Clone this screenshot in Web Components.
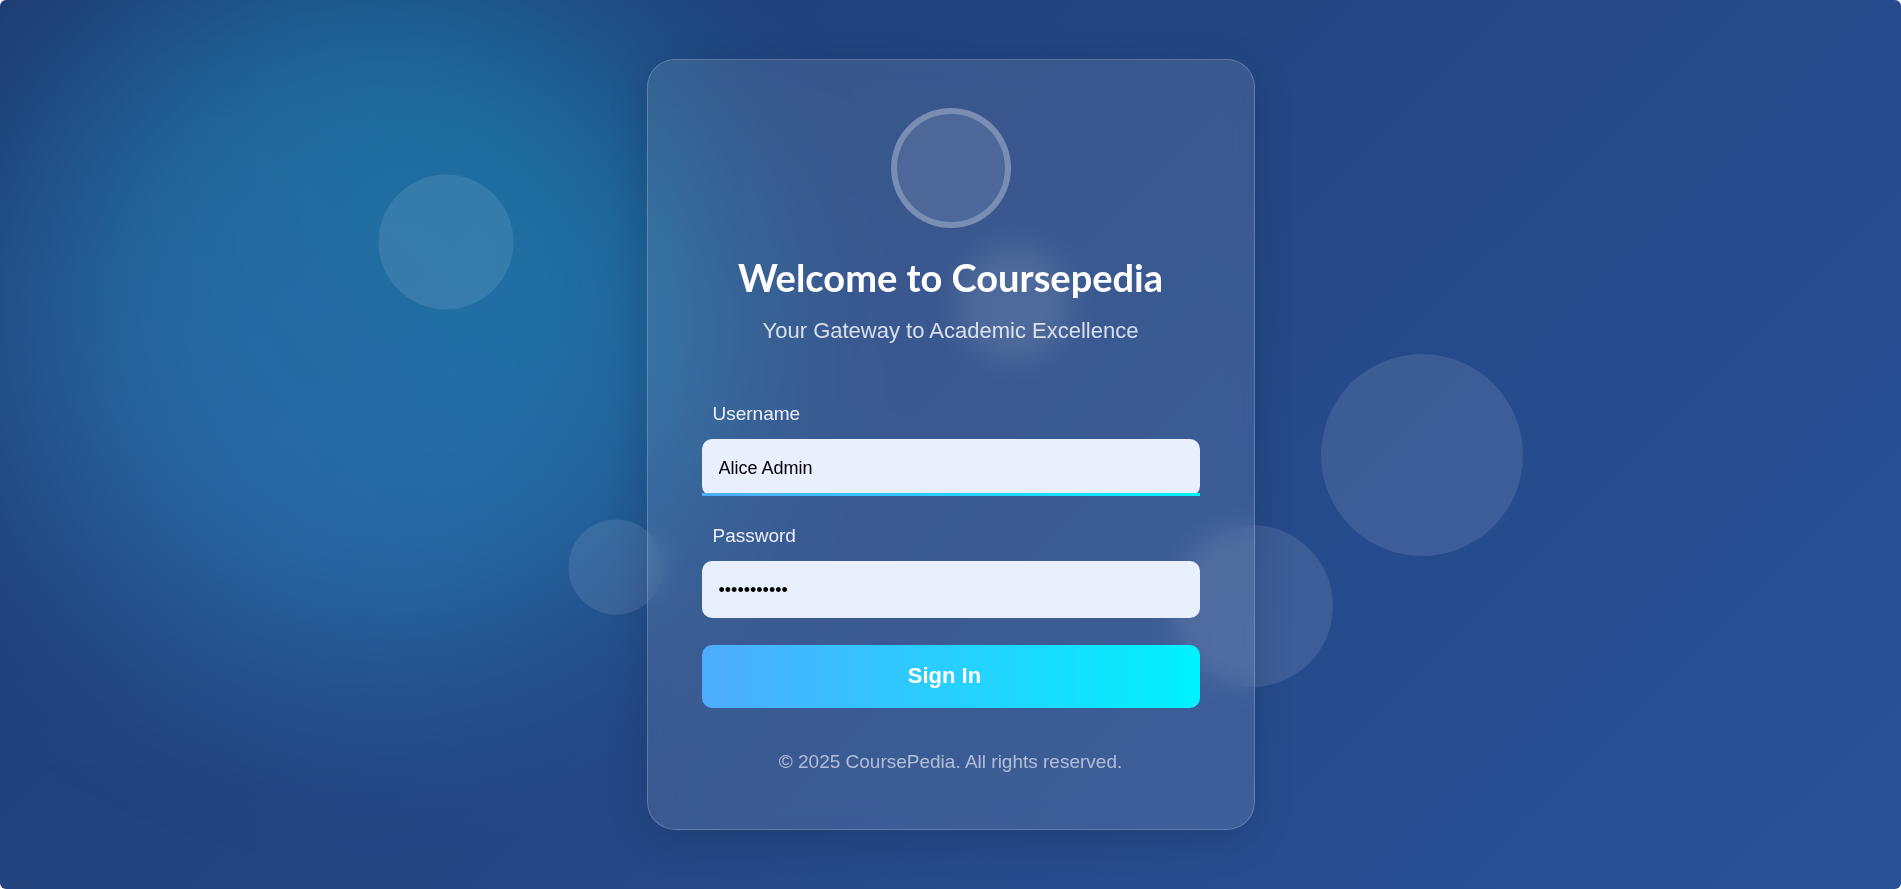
<!DOCTYPE html>
<html lang="en">
<head>
<meta charset="utf-8">
<title>Coursepedia – Sign In</title>
<style>
html{background:#fff}
body{margin:0;font-family:"Liberation Sans",Arial,sans-serif}
</style>
</head>
<body>
<login-page></login-page>
<script>
function define(name, html, setup) {
  const template = document.createElement('template');
  template.innerHTML = html;
  customElements.define(name, class extends HTMLElement {
    connectedCallback() {
      if (this.shadowRoot) return;
      const root = this.attachShadow({ mode: 'open' });
      root.append(template.content.cloneNode(true));
      if (setup) setup(this, root);
    }
  });
}

define('glow-backdrop', `
<style>
:host{position:absolute;inset:0;overflow:hidden;background:linear-gradient(135deg,#1e3c72,#2a5298)}
b{position:absolute;left:360px;top:320px;width:700px;aspect-ratio:1;border-radius:50%;transform:translate(-50%,-50%);background:linear-gradient(45deg,#4facfe,#00f2fe);opacity:.3;filter:blur(100px)}
i{position:absolute;border-radius:50%;background:rgba(255,255,255,.1);transform:translate(-50%,-50%);aspect-ratio:1}
</style>
<b></b>
<i style="left:446px;top:242px;width:135px"></i>
<i style="left:616px;top:567px;width:95px"></i>
<i style="left:1014px;top:303px;width:116px"></i>
<i style="left:1422px;top:455px;width:202px"></i>
<i style="left:1252px;top:606px;width:162px"></i>`);

define('brand-header', `
<style>
:host{display:flex;flex-direction:column;align-items:center;text-align:center}
.logo{box-sizing:border-box;width:120px;height:120px;border:6px solid rgba(255,255,255,.25);border-radius:50%;background:rgba(255,255,255,.1)}
h1{margin:21px 0 0;font:700 38px/56px Lato,sans-serif;color:#fff}
p{margin:10px 0 0;font-size:22px;line-height:32px;color:rgba(255,255,255,.8)}
</style>
<div class="logo"></div>
<h1><slot name="title"></slot></h1>
<p><slot name="tagline"></slot></p>`);

define('text-field', `
<style>
:host{display:block}
label{display:block;margin-left:11px;font-size:19px;line-height:26px;color:rgba(255,255,255,.9)}
.box{position:relative;margin-top:12px}
input{display:block;box-sizing:border-box;width:100%;height:57px;padding:2px 17px 0;border:0;border-radius:10px;outline:0;background:#e8f0fe;color:#000;font:18px "Liberation Sans",Arial,sans-serif}
:host([active]) .box::after{content:"";position:absolute;left:0;right:0;bottom:0;height:3px;background:linear-gradient(90deg,#4facfe,#00f2fe)}
</style>
<label for="field"></label>
<div class="box"><input id="field"></div>`, (host, root) => {
  root.querySelector('label').textContent = host.getAttribute('label');
  const input = root.querySelector('input');
  input.type = host.getAttribute('type') || 'text';
  input.value = host.getAttribute('value') || '';
});

define('submit-button', `
<style>
:host{display:block}
button{display:block;width:100%;height:63px;padding:0 12px 2px 0;border:0;border-radius:10px;background:linear-gradient(90deg,#4facfe,#00f2fe);color:#fff;font:700 22px "Liberation Sans",Arial,sans-serif}
</style>
<button type="button"><slot></slot></button>`);

define('login-card', `
<style>
:host{position:relative;display:block;box-sizing:border-box;width:608px;max-width:100%;padding:48px 54px 53px;border:1px solid rgba(255,255,255,.2);border-radius:28px;background:rgba(255,255,255,.1);-webkit-backdrop-filter:blur(12px);backdrop-filter:blur(12px);box-shadow:0 10px 40px rgba(0,0,0,.15)}
form{display:grid;gap:27px;margin-top:54px}
footer{margin-top:40px;text-align:center;font-size:19px;line-height:28px;color:rgba(255,255,255,.6)}
</style>
<brand-header><span slot="title">Welcome to Coursepedia</span><span slot="tagline">Your Gateway to Academic Excellence</span></brand-header>
<form>
<text-field label="Username" value="Alice Admin" active></text-field>
<text-field label="Password" type="password" value="password123"></text-field>
<submit-button>Sign In</submit-button>
</form>
<footer>© 2025 CoursePedia. All rights reserved.</footer>`);

define('login-page', `
<style>
:host{position:relative;display:flex;align-items:center;justify-content:center;box-sizing:border-box;min-height:100vh;padding:24px;border-radius:6px;overflow:hidden}
</style>
<glow-backdrop></glow-backdrop>
<login-card></login-card>`);
</script>
</body>
</html>
